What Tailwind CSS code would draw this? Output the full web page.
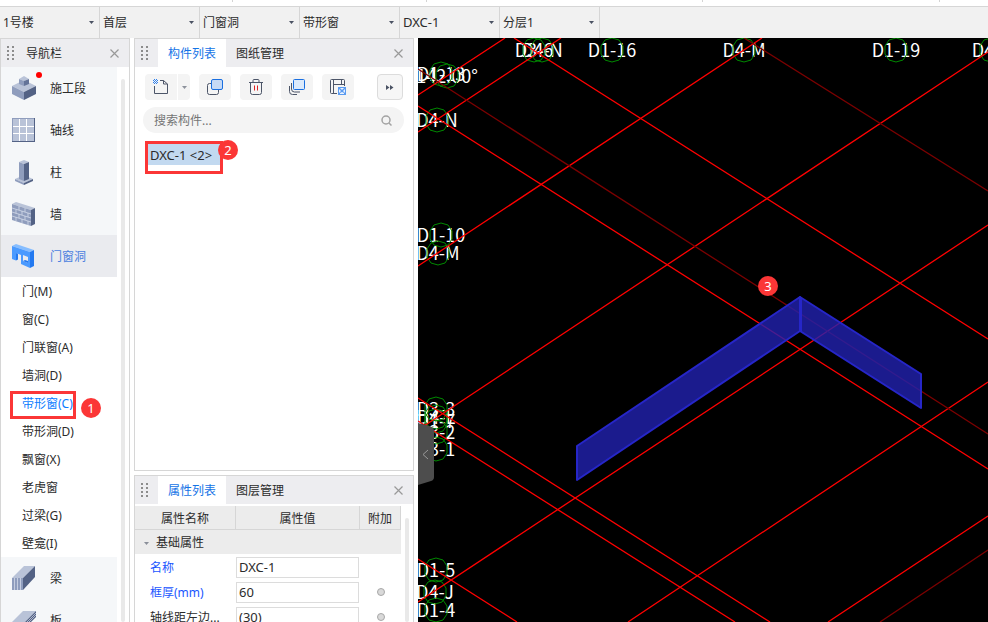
<!DOCTYPE html>
<html lang="zh-CN">
<head>
    <meta charset="UTF-8">
    <meta name="viewport" content="width=device-width, initial-scale=1.0">
    <title>带形窗</title>
    <script src="https://cdn.jsdelivr.net/npm/@tailwindcss/browser@4"></script>
</head>
<body class="h-screen flex flex-col overflow-hidden bg-white text-xs text-[#2b2b2b] font-['Noto_Sans','Noto_Sans_CJK_SC',sans-serif]">

    <!-- Shared icons -->
    <svg class="hidden">
        <symbol id="grip" viewBox="0 0 7 15">
            <path fill="#8c8c8c" d="M0 0h2v2H0zM5 0h2v2H5zM0 4h2v2H0zM5 4h2v2H5zM0 8h2v2H0zM5 8h2v2H5zM0 12h2v2H0zM5 12h2v2H5z"/>
        </symbol>
        <symbol id="close" viewBox="0 0 9 9">
            <path fill="none" stroke="#999" stroke-width="1.200" d="M.5 .5l8 8M8.500 .5l-8 8"/>
        </symbol>
        <symbol id="caret" viewBox="0 0 5 3">
            <path fill="#4a5263" d="M0 0h5L2.500 3z"/>
        </symbol>
    </svg>

    <!-- Ribbon bottom edge -->
    <div class="h-1.5 shrink-0 flex">
        <span class="w-[233px] h-0.5 border-r border-[#d4d4d4]"></span>
        <span class="w-[194px] h-0.5 border-r border-[#d4d4d4]"></span>
        <span class="w-[276px] h-0.5 border-r border-[#d4d4d4]"></span>
        <span class="w-[237px] h-0.5 border-r border-[#d4d4d4]"></span>
    </div>

    <!-- Selector bar -->
    <div class="h-8 shrink-0 flex bg-[#f1f1f1] border-t border-[#d6d6d6]">
        <label class="relative w-[100px] border-r border-[#d6d6d6]">
            <select aria-label="楼栋" class="appearance-none w-full h-full pl-[3px] outline-none"><option>1号楼</option></select>
            <svg class="absolute right-[5px] top-3.5 w-[5px] h-[3px] pointer-events-none"><use href="#caret"/></svg>
        </label>
        <label class="relative w-[100px] border-r border-[#d6d6d6]">
            <select aria-label="楼层" class="appearance-none w-full h-full pl-[3px] outline-none"><option>首层</option></select>
            <svg class="absolute right-[5px] top-3.5 w-[5px] h-[3px] pointer-events-none"><use href="#caret"/></svg>
        </label>
        <label class="relative w-[100px] border-r border-[#d6d6d6]">
            <select aria-label="构件类别" class="appearance-none w-full h-full pl-[3px] outline-none"><option>门窗洞</option></select>
            <svg class="absolute right-[5px] top-3.5 w-[5px] h-[3px] pointer-events-none"><use href="#caret"/></svg>
        </label>
        <label class="relative w-[100px] border-r border-[#d6d6d6]">
            <select aria-label="构件类型" class="appearance-none w-full h-full pl-[3px] outline-none"><option>带形窗</option></select>
            <svg class="absolute right-[5px] top-3.5 w-[5px] h-[3px] pointer-events-none"><use href="#caret"/></svg>
        </label>
        <label class="relative w-[100px] border-r border-[#d6d6d6]">
            <select aria-label="构件" class="appearance-none w-full h-full pl-[3px] text-[13px] outline-none"><option>DXC-1</option></select>
            <svg class="absolute right-[5px] top-3.5 w-[5px] h-[3px] pointer-events-none"><use href="#caret"/></svg>
        </label>
        <label class="relative w-[100px] border-r border-[#d6d6d6]">
            <select aria-label="分层" class="appearance-none w-full h-full pl-[3px] outline-none"><option>分层1</option></select>
            <svg class="absolute right-[5px] top-3.5 w-[5px] h-[3px] pointer-events-none"><use href="#caret"/></svg>
        </label>
    </div>

    <div class="flex-1 min-h-0 flex">

        <!-- Navigation -->
        <aside class="w-[130px] shrink-0 flex flex-col border-x border-t border-[#d6d6d6]">
            <header class="h-7 shrink-0 flex items-center pl-1.5 pr-2.5 bg-[#ededf0]">
                <svg class="w-[7px] h-[15px]"><use href="#grip"/></svg>
                <h2 class="ml-3 flex-1 pt-0.5">导航栏</h2>
                <button aria-label="关闭"><svg class="w-[9px] h-[9px]"><use href="#close"/></svg></button>
            </header>
            <div class="flex-1 min-h-0 flex overflow-hidden">
                <nav class="w-[116px] bg-[#f5f7f9]">
                    <a href="#" class="relative h-[42px] flex items-center pt-0.5 pl-2.5 gap-[13px]">
                        <svg class="w-[26px] h-[26px]" viewBox="0 0 26 26">
                            <path fill="#b9c3d8" d="M1 10L13 4l12 6-12 6z"/><path fill="#8f9dbd" d="M1 10l12 6v8L1 18z"/><path fill="#536285" d="M25 10l-12 6v8l12-6z"/>
                            <path fill="#b9c3d8" d="M8 3l5-3 5 3-5 2z"/><path fill="#8f9dbd" d="M8 3l5 2v5l-5-2z"/><path fill="#637398" d="M18 3l-5 2v5l5-2z"/>
                        </svg>
                        施工段
                        <i class="absolute left-[35px] top-[5px] size-1.5 rounded-full bg-[#f00]"></i>
                    </a>
                    <a href="#" class="h-[42px] flex items-center pt-0.5 pl-2.5 gap-[13px]">
                        <svg class="w-[26px] h-[26px]" viewBox="0 0 26 26">
                            <path fill="#536285" d="M1 0h23v24H1z"/><path fill="#8f9dbd" d="M1 0h22v23H1z"/><path fill="#b9c3d8" d="M2 1h21v22H2z"/>
                            <path fill="none" stroke="#fff" d="M8.500 1v22M15.500 1v22M2 8.500h21M2 15.500h21"/>
                        </svg>
                        轴线
                    </a>
                    <a href="#" class="h-[42px] flex items-center pt-0.5 pl-2.5 gap-[13px]">
                        <svg class="w-[26px] h-[26px]" viewBox="0 0 26 26">
                            <path fill="#b9c3d8" d="M4 19l9-4 9 4-9 4z"/><path fill="#8f9dbd" d="M4 19l9 4v2l-9-4z"/><path fill="#536285" d="M22 19l-9 4v2l9-4z"/>
                            <path fill="#b9c3d8" d="M8 2l5-2 5 2-5 2z"/><path fill="#8f9dbd" d="M8 2l5 2v17l-5-2z"/><path fill="#536285" d="M18 2l-5 2v17l5-2z"/>
                        </svg>
                        柱
                    </a>
                    <a href="#" class="h-[42px] flex items-center pt-0.5 pl-2.5 gap-[13px]">
                        <svg class="w-[26px] h-[26px]" viewBox="0 0 26 26">
                            <path fill="#b9c3d8" d="M1 2l4-2 19 6-4 2z"/><path fill="#8f9dbd" d="M1 2l19 6v16L1 18z"/><path fill="#536285" d="M20 8l4-2v16l-4 2z"/>
                            <path fill="none" stroke="#d3daea" stroke-width=".8" d="M1 6l19 6M1 10l19 6M1 14l19 6M8 4v4M14 6v4M5 7.500v4M11 9v4M17 11v4M8 12v4M14 14v4M5 15v4M11 17v4M17 19v4"/>
                        </svg>
                        墙
                    </a>
                    <a href="#" class="h-[42px] flex items-center pt-0.5 pl-2.5 gap-[13px] bg-[#eaebef] text-[#4a7fe0]">
                        <svg class="w-[26px] h-[26px]" viewBox="0 0 26 26">
                            <path fill="#86bdff" d="M1 2l4-2 18 6-4 2z"/><path fill="#2379f0" d="M19 8l4-2v16l-4 2z"/>
                            <path fill="#4a9aff" fill-rule="evenodd" d="M1 2l18 6v16l-9-4v-9L5 9v7.500l-4-1.500zM12 11v6l5 2v-6z"/>
                            <path fill="#2379f0" d="M5 9l2 .7V15.500l-2 1zM12 17l2-1 3 1v2z"/>
                        </svg>
                        门窗洞
                    </a>
                    <ul class="bg-white">
                        <li><a href="#" class="h-7 flex items-center pt-0.5 pl-[21px]">门(M)</a></li>
                        <li><a href="#" class="h-7 flex items-center pt-0.5 pl-[21px]">窗(C)</a></li>
                        <li><a href="#" class="h-7 flex items-center pt-0.5 pl-[21px]">门联窗(A)</a></li>
                        <li><a href="#" class="h-7 flex items-center pt-0.5 pl-[21px]">墙洞(D)</a></li>
                        <li class="relative">
                            <a href="#" class="h-7 flex items-center pt-0.5 pl-[21px] text-[#0a7bff]">带形窗(C)</a>
                            <span class="absolute left-[9px] top-0.5 w-[66px] h-7 border-3 border-[#fb3636]"></span>
                            <span class="absolute left-20 top-[9px] size-5 rounded-full bg-[#fb3636] text-white text-[13px] leading-5 text-center">1</span>
                        </li>
                        <li><a href="#" class="h-7 flex items-center pt-0.5 pl-[21px]">带形洞(D)</a></li>
                        <li><a href="#" class="h-7 flex items-center pt-0.5 pl-[21px]">飘窗(X)</a></li>
                        <li><a href="#" class="h-7 flex items-center pt-0.5 pl-[21px]">老虎窗</a></li>
                        <li><a href="#" class="h-7 flex items-center pt-0.5 pl-[21px]">过梁(G)</a></li>
                        <li><a href="#" class="h-7 flex items-center pt-0.5 pl-[21px]">壁龛(I)</a></li>
                    </ul>
                    <a href="#" class="h-[42px] flex items-center pt-0.5 pl-2.5 gap-[13px]">
                        <svg class="w-[26px] h-[26px]" viewBox="0 0 26 26">
                            <path fill="#b9c3d8" d="M1 12L13 0h11L12 12z"/><path fill="#8f9dbd" d="M1 12h11v12H1z"/><path fill="#536285" d="M12 12L24 0v11L12 24z"/>
                            <path fill="none" stroke="#c5cde0" d="M3.500 12v12M6.500 12v12M9.500 12v12"/>
                        </svg>
                        梁
                    </a>
                    <a href="#" class="h-[42px] flex items-center pt-0.5 pl-2.5 gap-[13px]">
                        <svg class="w-[26px] h-[26px]" viewBox="0 0 26 26">
                            <path fill="#b9c3d8" d="M1 14L12 3h13L14 14z"/><path fill="#8f9dbd" d="M1 14h13v6H1z"/><path fill="#536285" d="M14 14L25 3v6L14 20z"/>
                            <path fill="none" stroke="#c5cde0" stroke-width=".8" d="M14 16L25 5M14 18L25 7"/>
                        </svg>
                        板
                    </a>
                </nav>
                <div class="flex-1 pl-1 pt-3"><div class="w-1 h-full rounded-full bg-[#e9e9e9]"></div></div>
            </div>
        </aside>

        <div class="w-[280px] ml-1 mr-1 shrink-0 flex flex-col gap-1">

            <!-- Component list -->
            <section class="h-[433px] shrink-0 border border-[#d6d6d6]">
                <header class="h-7 flex items-center pl-1.5 pr-2.5 bg-[#ededf0]">
                    <svg class="w-[7px] h-[15px]"><use href="#grip"/></svg>
                    <button class="ml-2.5 w-[68px] h-full pt-0.5 bg-white text-[#1473e6]">构件列表</button>
                    <button class="w-[68px] h-full pt-0.5">图纸管理</button>
                    <button class="ml-auto" aria-label="关闭"><svg class="w-[9px] h-[9px]"><use href="#close"/></svg></button>
                </header>
                <div class="flex gap-[9px] pt-[7px] pl-2.5 pr-2.5">
                    <div class="flex gap-px">
                        <button aria-label="新建" class="w-8 h-[26px] grid place-items-center rounded-l bg-[#f4f4f4]">
                            <svg class="w-4 h-4" viewBox="0 0 16 16" fill="none">
                                <path stroke="#4c5568" d="M1.500 7v7.500h13V5l-4-3.500H7M10.500 1.500V5h4"/>
                                <path fill="#2f80ed" d="M1 0h1v1H1zM3 0h1v1H3zM0 1h1v1H0zM2 1h1v1H2zM4 1h1v1H4zM1 2h1v1H1zM3 2h1v1H3zM0 3h1v1H0zM2 3h1v1H2zM4 3h1v1H4zM1 4h1v1H1zM3 4h1v1H3z"/>
                            </svg>
                        </button>
                        <button aria-label="新建选项" class="w-3 h-[26px] grid place-items-center rounded-r bg-[#f4f4f4]">
                            <svg class="w-[5px] h-[3px] opacity-60"><use href="#caret"/></svg>
                        </button>
                    </div>
                    <button aria-label="复制" class="w-8 h-[26px] grid place-items-center rounded bg-[#f4f4f4]">
                        <svg class="w-4 h-4" viewBox="0 0 16 16" fill="none">
                            <path stroke="#4c5568" d="M5 4.500H2.500q-2 0-2 2v7q0 2 2 2h7q2 0 2-2V11"/>
                            <rect x="4.500" y=".5" width="11" height="10" rx="1.500" fill="#c5d9f5" stroke="#1a6fe0"/>
                        </svg>
                    </button>
                    <button aria-label="删除" class="w-8 h-[26px] grid place-items-center rounded bg-[#f4f4f4]">
                        <svg class="w-4 h-4" viewBox="0 0 16 16" fill="none">
                            <path stroke="#4c5568" d="M1 3.500h14M5 3.500v-2q0-1 1-1h4q1 0 1 1v2M2.500 3.500v10q0 2 2 2h7q2 0 2-2v-10"/>
                            <path stroke="#e02020" d="M6.500 6.500v5M9.500 6.500v5"/>
                        </svg>
                    </button>
                    <button aria-label="层间复制" class="w-8 h-[26px] grid place-items-center rounded bg-[#f4f4f4]">
                        <svg class="w-4 h-4" viewBox="0 0 16 16" fill="none">
                            <path stroke="#4c5568" d="M2.500 4v6q0 3 3 3H11M.5 7v5.500q0 3 3 3H8"/>
                            <rect x="4.500" y=".5" width="11" height="10" rx="1" fill="#dceafb" stroke="#1a6fe0"/>
                        </svg>
                    </button>
                    <button aria-label="存档" class="w-8 h-[26px] grid place-items-center rounded bg-[#f4f4f4]">
                        <svg class="w-4 h-4" viewBox="0 0 16 16" fill="none">
                            <path stroke="#4c5568" d="M7 14.500H1.500q-1 0-1-1V1.500q0-1 1-1h12q1 0 1 1V7M3.500 .5v14M3.500 5.500h11M11.500 .5v5"/>
                            <path fill="#5a9bf0" d="M8 8h8v8H8z"/><path fill="#eaf2ff" d="M10 9h4l-2 2zM9 10l2 2-2 2zM15 10l-2 2 2 2zM10 15h4v-1l-2-1-2 1z"/>
                        </svg>
                    </button>
                    <button aria-label="更多" class="ml-auto w-[26px] h-[26px] grid place-items-center rounded bg-[#f6f6f6] border border-[#dcdcdc]">
                        <svg class="w-2 h-[5px]" viewBox="0 0 8 5"><path fill="#4a5263" d="M0 0l3.500 2.500L0 5zM4 0l3.500 2.500L4 5z"/></svg>
                    </button>
                </div>
                <label class="mt-[7px] ml-2 mr-[9px] h-[26px] flex items-center pl-[11px] pr-3 rounded-full bg-[#f4f4f4]">
                    <input type="text" aria-label="搜索构件" placeholder="搜索构件..." class="flex-1 min-w-0 pt-0.5 outline-none placeholder-[#757575]">
                    <svg class="w-[11px] h-[11px]" viewBox="0 0 11 11" fill="none" stroke="#a3a3a3" stroke-width="1.500"><circle cx="5" cy="5" r="4"/><path d="M8 8l2.500 2.500"/></svg>
                </label>
                <div class="relative mt-2 ml-2.5 w-[78px] h-[33px] border-3 border-[#fb3636]">
                    <button class="block w-[72px] h-[21px] pl-0.5 bg-[#c2d9f0] text-[13px] text-left leading-5 whitespace-nowrap">DXC-1 &lt;2&gt;</button>
                    <span class="absolute left-[70px] -top-1 size-5 rounded-full bg-[#fb3636] text-white text-[13px] leading-5 text-center">2</span>
                </div>
            </section>

            <!-- Properties -->
            <section class="flex-1 min-h-0 flex flex-col border-x border-t border-[#d6d6d6] overflow-hidden">
                <header class="h-7 shrink-0 flex items-center pl-1.5 pr-2.5 bg-[#ededf0]">
                    <svg class="w-[7px] h-[15px]"><use href="#grip"/></svg>
                    <button class="ml-2.5 w-[68px] h-full pt-0.5 bg-white text-[#1473e6]">属性列表</button>
                    <button class="w-[68px] h-full pt-0.5">图层管理</button>
                    <button class="ml-auto" aria-label="关闭"><svg class="w-[9px] h-[9px]"><use href="#close"/></svg></button>
                </header>
                <div class="flex-1 min-h-0 flex pt-0.5">
                    <div>
                        <table class="w-[266px] table-fixed border-separate border-spacing-0">
                            <thead>
                                <tr class="h-6 bg-[#ececec]">
                                    <th class="w-[101px] pt-0.5 font-normal border-r border-b border-[#d6d6d6]">属性名称</th>
                                    <th class="w-[124px] pt-0.5 font-normal border-r border-b border-[#d6d6d6]">属性值</th>
                                    <th class="w-[41px] pt-0.5 font-normal border-r border-b border-[#d6d6d6]">附加</th>
                                </tr>
                            </thead>
                            <tbody>
                                <tr class="h-6 bg-[#ececec]">
                                    <th colspan="3" class="pt-0.5 font-normal text-left pl-[9px]">
                                        <div class="flex items-center gap-[7px]"><svg class="w-[5px] h-[3px] opacity-60"><use href="#caret"/></svg>基础属性</div>
                                    </th>
                                </tr>
                                <tr class="h-[25px] text-[#1a56ff]">
                                    <td class="pt-0.5 pl-[15px]"><label for="name">名称</label></td>
                                    <td class="pt-0.5"><input id="name" value="DXC-1" class="block w-[123px] h-[21px] px-0.5 pb-0.5 border border-[#dcdcdc] bg-white text-[13px] text-[#2b2b2b] outline-none"></td>
                                    <td></td>
                                </tr>
                                <tr class="h-[25px] text-[#1a56ff]">
                                    <td class="pt-0.5 pl-[15px]"><label for="thick">框厚(mm)</label></td>
                                    <td class="pt-0.5"><input id="thick" value="60" class="block w-[123px] h-[21px] px-0.5 pb-0.5 border border-[#dcdcdc] bg-white text-[13px] text-[#2b2b2b] outline-none"></td>
                                    <td><input type="checkbox" aria-label="附加框厚" class="appearance-none block mx-auto size-2 rounded-full border border-[#a8a8a8] bg-[#d9d9d9]"></td>
                                </tr>
                                <tr class="h-[25px]">
                                    <td class="pt-0.5 pl-[15px] whitespace-nowrap"><label for="dist">轴线距左边...</label></td>
                                    <td class="pt-0.5"><input id="dist" value="(30)" class="block w-[123px] h-[21px] px-0.5 pb-0.5 border border-[#dcdcdc] bg-white text-[13px] outline-none"></td>
                                    <td><input type="checkbox" aria-label="附加轴线距离" class="appearance-none block mx-auto size-2 rounded-full border border-[#a8a8a8] bg-[#d9d9d9]"></td>
                                </tr>
                            </tbody>
                        </table>
                    </div>
                    <div class="flex-1 pl-1 pt-3"><div class="w-1 h-full rounded-full bg-[#e9e9e9]"></div></div>
                </div>
            </section>
        </div>

        <!-- Model view -->
        <main class="relative flex-1 min-w-0 bg-black overflow-hidden">
            <svg class="block w-full h-full" viewBox="418 38 570 584" preserveAspectRatio="xMinYMin slice">
                <defs>
                    <path id="bubble" d="M0 -12L7 -10L11 -4V4L7 10L0 12L-7 10L-11 4V-4L-7 -10z"/>
                </defs>
                <g id="labels" fill="#fff" class="text-[18px] font-['Noto_Sans_CJK_SC',sans-serif]" text-anchor="middle"></g>
                <g id="bubbles" fill="none" stroke="#008a00"></g>
                <g fill="none" stroke="#f00" stroke-width="1.300">
                    <path d="M418 95L505 38M418 132L561 38M418 266L762 38M418 430L988 52M418 602L988 225M628 622L988 382M828 622L988 516"/>
                    <path d="M514 38L988 339M418 106L988 469M418 398L770 622M418 421L735 622M418 559L517 622"/>
                    <path stroke="#7c0000" d="M744 38L988 191M418 69L988 434M880 622L988 550"/>
                </g>
                <g fill="#2222b0" fill-opacity=".8" stroke="#2626c8" stroke-width="2" stroke-linejoin="round">
                    <path d="M577 446L800 297V331L577 480z"/>
                    <path d="M800 297L921 374V408L800 331z"/>
                    <path stroke-width="3" d="M800.500 298V331"/>
                </g>
            </svg>
            <button aria-label="收起" class="absolute left-0 top-[385px] w-4 h-[62px]">
                <svg class="w-4 h-[62px]" viewBox="0 0 16 62">
                    <path fill="#4d4d4d" d="M0 0L11 3Q16 4 16 8V54Q16 57 13 58L0 62z"/>
                    <path fill="none" stroke="#999" d="M10 27l-5 4.500 5 4.500"/>
                </svg>
            </button>
            <span class="absolute left-[340px] top-[238px] size-5 rounded-full bg-[#fb3636] text-white text-[13px] leading-5 text-center">3</span>
        </main>
    </div>

    <script>
        // Axis labels: text, centre x, centre y
        const axes = [
            ["D3-6", 534, 50], ["D4-N", 542, 50], ["D1-16", 612, 50], ["D4-M", 744, 50],
            ["D1-19", 896, 50], ["D4-L", 991, 50], ["D1-13", 441, 74], ["142.00°", 447, 76],
            ["D4-N", 437, 120], ["D1-10", 441, 235], ["D4-M", 438, 253],
            ["D3-3", 436, 409], ["D4-L", 436, 417], ["D1-7", 436, 421], ["D3-2", 436, 432], ["D3-1", 436, 449],
            ["D1-5", 436, 570], ["D4-J", 435, 592], ["D1-4", 436, 610]
        ];
        const ns = "http://www.w3.org/2000/svg";

        axes.forEach(([name, x, y]) => {
            const text = document.createElementNS(ns, "text");
            text.setAttribute("x", x);
            text.setAttribute("y", y + 7);
            text.textContent = name;
            document.getElementById("labels").appendChild(text);

            const bubble = document.createElementNS(ns, "use");
            bubble.setAttribute("href", "#bubble");
            bubble.setAttribute("x", x);
            bubble.setAttribute("y", y);
            document.getElementById("bubbles").appendChild(bubble);
        });
    </script>
</body>
</html>
